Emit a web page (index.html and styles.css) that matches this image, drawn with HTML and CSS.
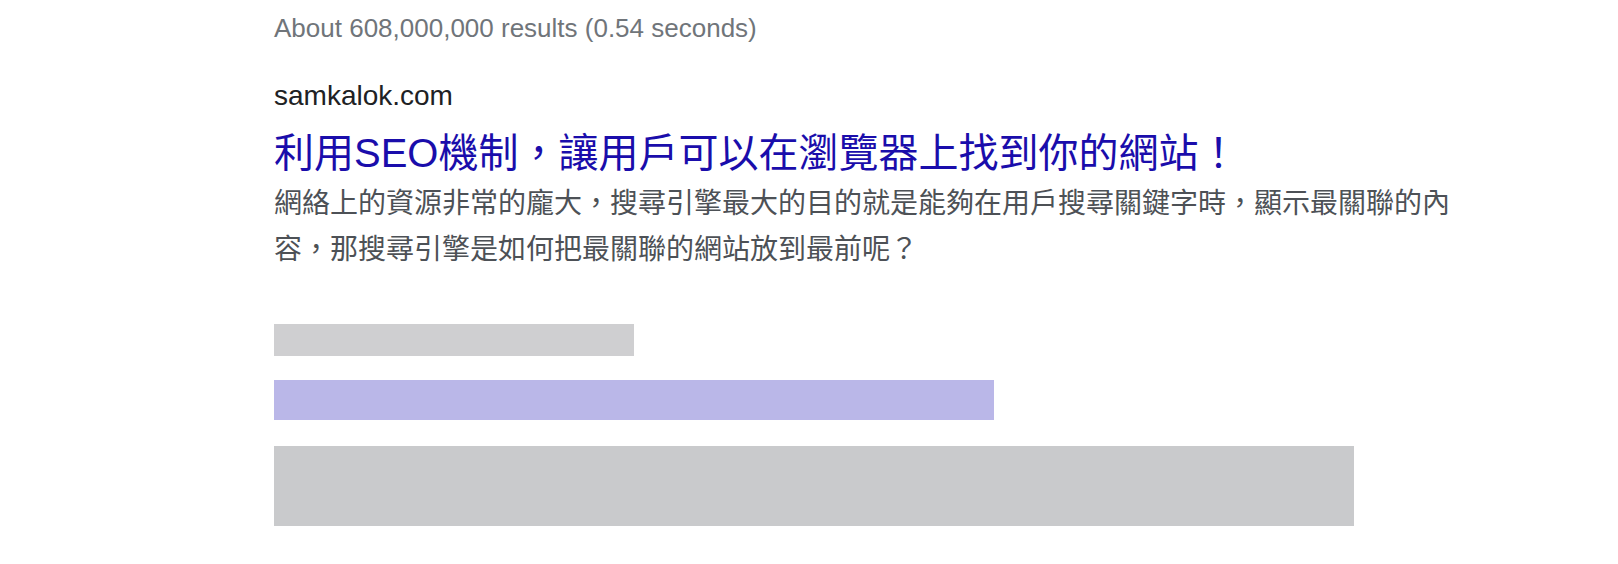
FILE: index.html
```html
<!DOCTYPE html>
<html lang="zh-Hant">
<head>
  <meta charset="UTF-8" />
  <title>SEO result preview</title>
  <link rel="stylesheet" href="styles.css">
</head>
<body>

  <div class="results">
    <p class="stats">About 608,000,000 results (0.54 seconds)</p>

    <div class="result">
      <p class="site">samkalok.com</p>
      <h3 class="title">利用SEO機制，讓用戶可以在瀏覽器上找到你的網站！</h3>
      <p class="snippet">網絡上的資源非常的龐大，搜尋引擎最大的目的就是能夠在用戶搜尋關鍵字時，顯示最關聯的內容，那搜尋引擎是如何把最關聯的網站放到最前呢？</p>
    </div>

    <div class="skeleton">
      <div class="bar bar-site"></div>
      <div class="bar bar-title"></div>
      <div class="bar bar-snippet"></div>
    </div>
  </div>

</body>
</html>
```

FILE: styles.css
```css
body {
  margin: 0;
  background: #fff;
  font-family: "Liberation Sans", Arial, "Noto Sans CJK TC", sans-serif;
}
p, h3 {
  margin: 0;
}
.results {
  margin-left: 274px;
  padding-top: 8px;
  width: 1200px;
}
.stats {
  font-size: 26px;
  line-height: 40px;
  color: #70757a;
}
.result {
  margin-top: 28px;
}
.site {
  font-size: 28px;
  line-height: 40px;
  color: #202124;
}
.title {
  margin-top: 11px;
  font-size: 40px;
  line-height: 52px;
  font-weight: normal;
  color: #1a0dab;
}
.snippet {
  margin-top: 2px;
  font-size: 28px;
  line-height: 46px;
  color: #4d5156;
}
.skeleton {
  margin-top: 51px;
}
.bar {
  height: 32px;
}
.bar-site {
  width: 360px;
  background: #cfcfd1;
}
.bar-title {
  width: 720px;
  height: 40px;
  margin-top: 24px;
  background: #bab7e8;
}
.bar-snippet {
  width: 1080px;
  height: 80px;
  margin-top: 26px;
  background: #c9cacc;
}
```
